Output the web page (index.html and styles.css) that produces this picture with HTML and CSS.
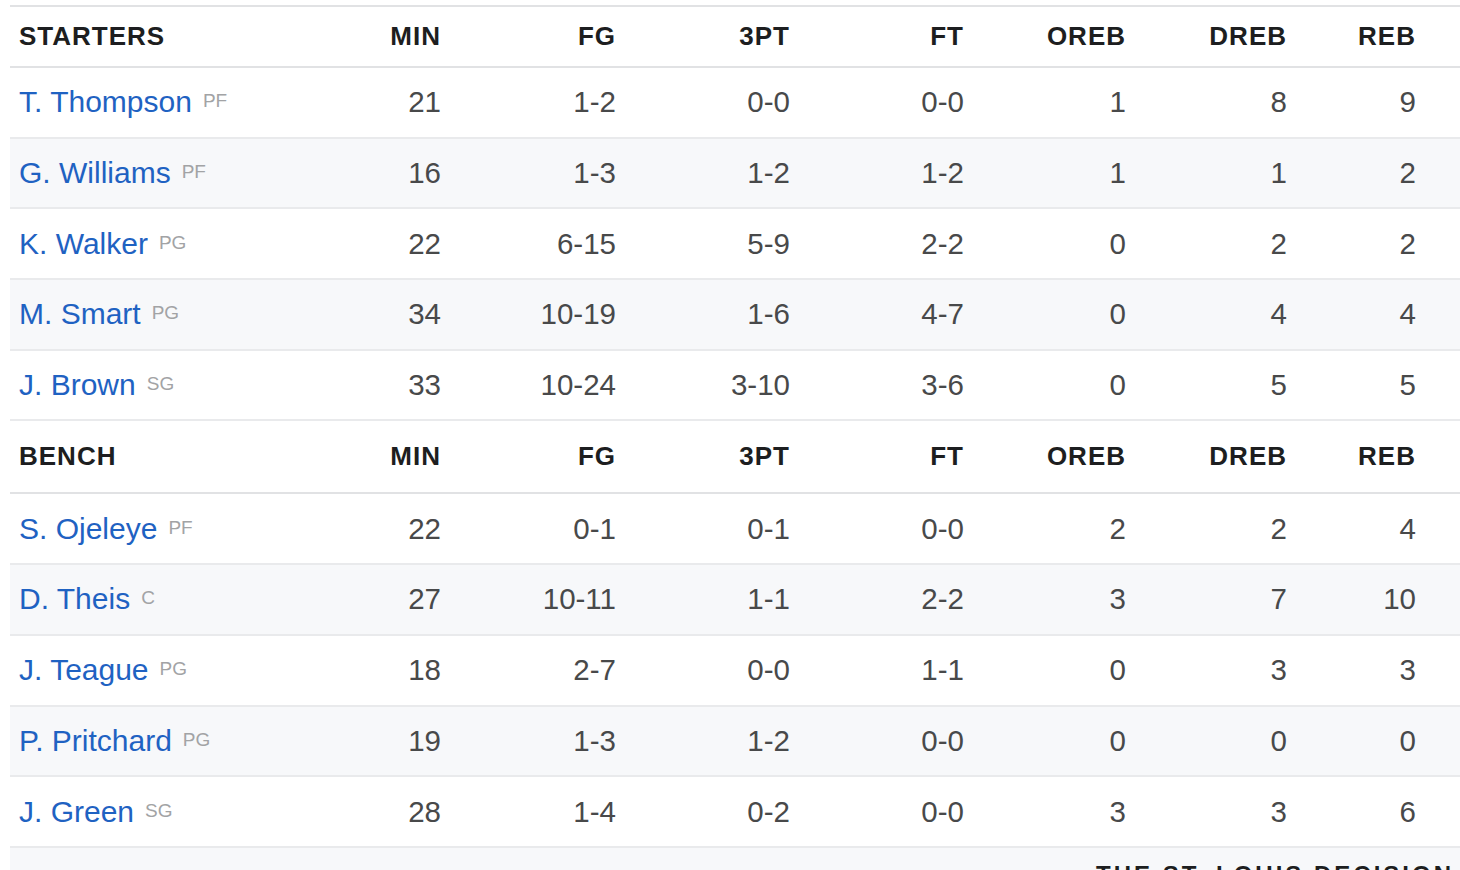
FILE: index.html
```html
<!DOCTYPE html>
<html lang="en">
<head>
<meta charset="utf-8">
<title>Box Score</title>
<link rel="stylesheet" href="styles.css">
</head>
<body>
<div class="boxscore">
  <table class="stats">
    <colgroup>
      <col class="c-name"><col class="c-min"><col class="c-fg"><col class="c-3pt"><col class="c-ft"><col class="c-oreb"><col class="c-dreb"><col class="c-reb"><col class="c-pad">
    </colgroup>
    <tbody>
      <tr class="head first">
        <th class="name">STARTERS</th><th>MIN</th><th>FG</th><th>3PT</th><th>FT</th><th>OREB</th><th>DREB</th><th>REB</th><th></th>
      </tr>
      <tr class="row"><td class="name"><a href="#">T. Thompson</a><span class="pos">PF</span></td><td>21</td><td>1-2</td><td>0-0</td><td>0-0</td><td>1</td><td>8</td><td>9</td><td></td></tr>
      <tr class="row alt"><td class="name"><a href="#">G. Williams</a><span class="pos">PF</span></td><td>16</td><td>1-3</td><td>1-2</td><td>1-2</td><td>1</td><td>1</td><td>2</td><td></td></tr>
      <tr class="row"><td class="name"><a href="#">K. Walker</a><span class="pos">PG</span></td><td>22</td><td>6-15</td><td>5-9</td><td>2-2</td><td>0</td><td>2</td><td>2</td><td></td></tr>
      <tr class="row alt"><td class="name"><a href="#">M. Smart</a><span class="pos">PG</span></td><td>34</td><td>10-19</td><td>1-6</td><td>4-7</td><td>0</td><td>4</td><td>4</td><td></td></tr>
      <tr class="row"><td class="name"><a href="#">J. Brown</a><span class="pos">SG</span></td><td>33</td><td>10-24</td><td>3-10</td><td>3-6</td><td>0</td><td>5</td><td>5</td><td></td></tr>
      <tr class="head bench">
        <th class="name">BENCH</th><th>MIN</th><th>FG</th><th>3PT</th><th>FT</th><th>OREB</th><th>DREB</th><th>REB</th><th></th>
      </tr>
      <tr class="row"><td class="name"><a href="#">S. Ojeleye</a><span class="pos">PF</span></td><td>22</td><td>0-1</td><td>0-1</td><td>0-0</td><td>2</td><td>2</td><td>4</td><td></td></tr>
      <tr class="row alt"><td class="name"><a href="#">D. Theis</a><span class="pos">C</span></td><td>27</td><td>10-11</td><td>1-1</td><td>2-2</td><td>3</td><td>7</td><td>10</td><td></td></tr>
      <tr class="row"><td class="name"><a href="#">J. Teague</a><span class="pos">PG</span></td><td>18</td><td>2-7</td><td>0-0</td><td>1-1</td><td>0</td><td>3</td><td>3</td><td></td></tr>
      <tr class="row alt"><td class="name"><a href="#">P. Pritchard</a><span class="pos">PG</span></td><td>19</td><td>1-3</td><td>1-2</td><td>0-0</td><td>0</td><td>0</td><td>0</td><td></td></tr>
      <tr class="row"><td class="name"><a href="#">J. Green</a><span class="pos">SG</span></td><td>28</td><td>1-4</td><td>0-2</td><td>0-0</td><td>3</td><td>3</td><td>6</td><td></td></tr>
    </tbody>
  </table>
  <div class="footer">
    <span class="footer-title">THE ST. LOUIS DECISION</span>
  </div>
</div>
</body>
</html>
```
FILE: styles.css
```css
html, body {
  margin: 0;
  padding: 0;
  background: #ffffff;
  overflow: hidden;
}

body {
  font-family: "Liberation Sans", Arial, sans-serif;
  width: 1460px;
  height: 870px;
}

.boxscore {
  padding: 5px 0 0 10px;
}

.stats {
  width: 1450px;
  table-layout: fixed;
  border-collapse: collapse;
  border-top: 2px solid #e1e2e4;
}

.c-name { width: 290px; }
.c-min { width: 141px; }
.c-fg { width: 175px; }
.c-3pt { width: 174px; }
.c-ft { width: 174px; }
.c-oreb { width: 162px; }
.c-dreb { width: 161px; }
.c-reb { width: 129px; }
.c-pad { width: 44px; }

.stats th,
.stats td {
  padding: 0;
  text-align: right;
  white-space: nowrap;
}

.stats .name {
  text-align: left;
  padding-left: 9px;
}

.head th {
  font-size: 26px;
  font-weight: bold;
  letter-spacing: 1px;
  color: #1d1e20;
  border-bottom: 2px solid #e1e2e4;
}

.head.first th { height: 59px; }
.head.bench th { height: 71px; }

.row td {
  height: 68.7px;
  font-size: 29.5px;
  color: #48494a;
  border-bottom: 2px solid #e9eaec;
}

.row .name {
  font-size: 30px;
}

.row.alt td {
  background: #f7f8fa;
}

.row a {
  color: #1f62c2;
  text-decoration: none;
}

.pos {
  font-size: 19px;
  color: #a2a3a5;
  margin-left: 11px;
  vertical-align: 5px;
}

.footer {
  width: 1450px;
  height: 40px;
  background: #f7f8fa;
  box-sizing: border-box;
  padding: 15px 0 0 1086px;
  line-height: 1;
}

.footer-title {
  font-size: 24px;
  font-weight: bold;
  letter-spacing: 3px;
  color: #1d1e20;
  white-space: nowrap;
}
```
